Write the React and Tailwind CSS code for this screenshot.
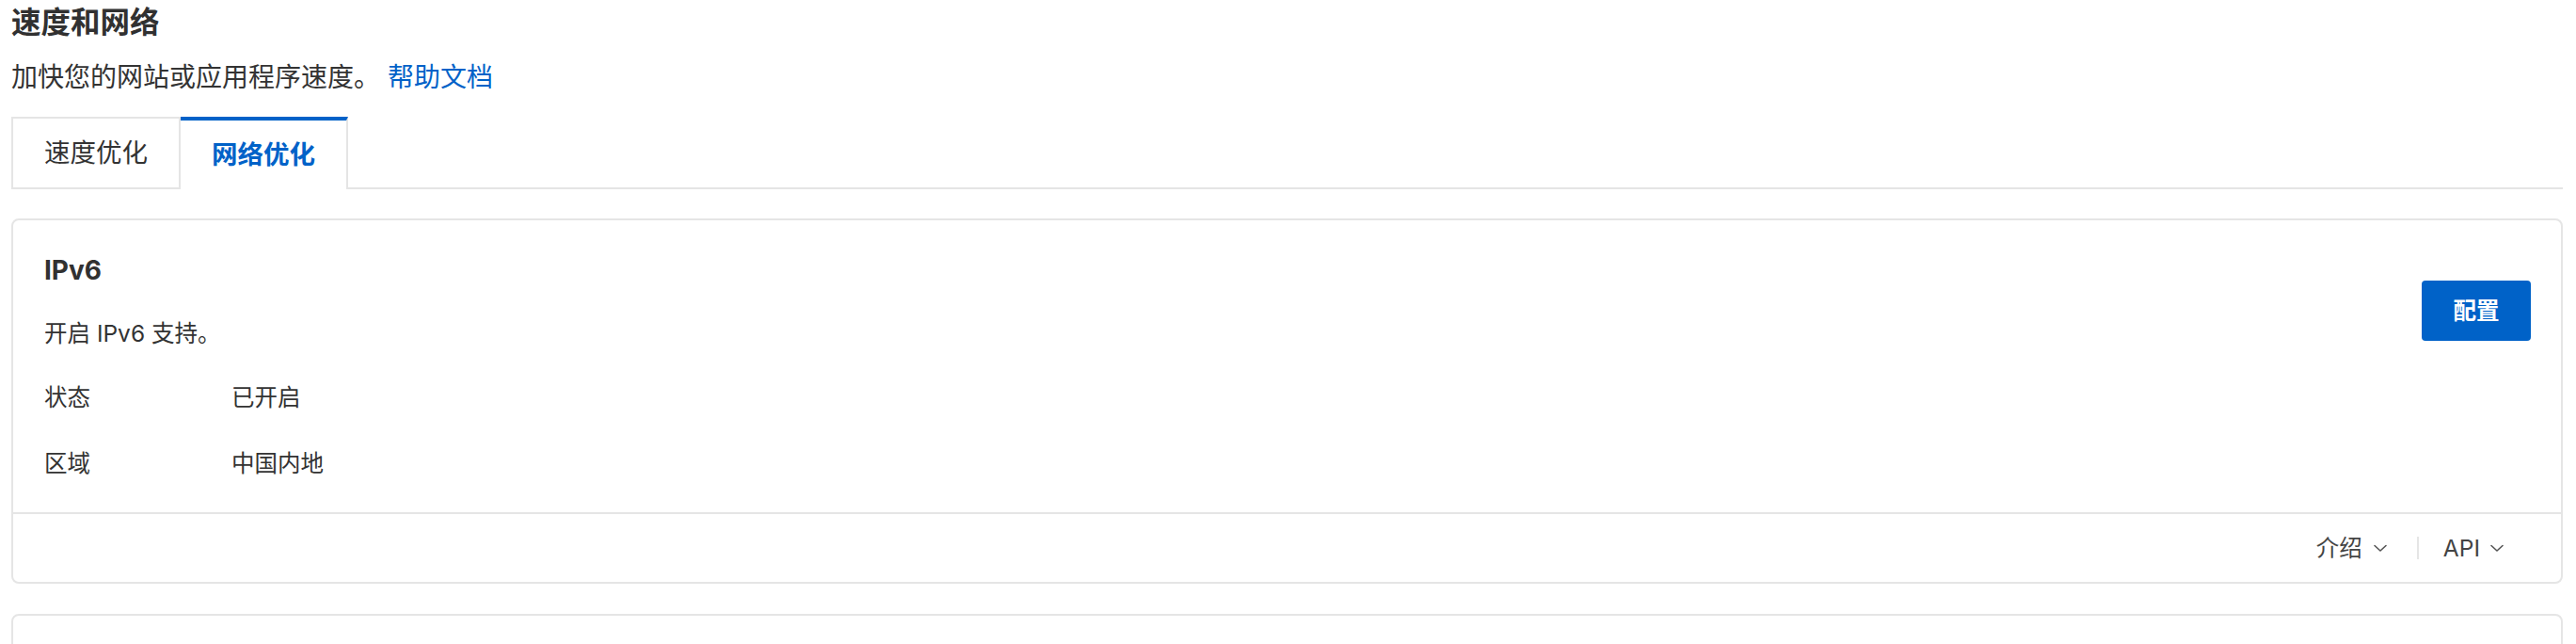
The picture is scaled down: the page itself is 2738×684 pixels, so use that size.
import React from "react";

function Chevron() {
  return (
    <svg width="16" height="10" viewBox="0 0 16 10" fill="none" className="shrink-0">
      <path d="M2 2.5 L8 8 L14 2.5" stroke="#555" strokeWidth="1.6" strokeLinecap="round" strokeLinejoin="round" />
    </svg>
  );
}

export default function App() {
  return (
    <div
      className="h-[684px] w-full overflow-hidden bg-white pl-[12px] pr-[14px] text-[#313131]"
      style={{ fontFamily: 'Inter, "Noto Sans CJK SC", "Noto Sans", sans-serif' }}
    >
      <h1 className="text-[31.5px] font-bold leading-[47px] text-[#313131]">速度和网络</h1>
      <p className="mt-[14px] text-[28px] leading-[42px] text-[#333]">
        加快您的网站或应用程序速度。 <span className="text-[#0062c8]">帮助文档</span>
      </p>

      <div className="mt-[21px] flex border-b-2 border-[#e5e5e5]">
        <div className="-mb-[2px] flex h-[77px] items-center border-2 border-[#e5e5e5] bg-white px-[33px] text-[27.5px] text-[#333]">
          速度优化
        </div>
        <div className="-mb-[2px] flex h-[77px] items-center border-t-4 border-r-2 border-t-[#0062c8] border-r-[#e5e5e5] bg-white px-[33px] text-[27.5px] font-bold text-[#0062c8]">
          网络优化
        </div>
      </div>

      <div className="mt-[31px] rounded-[8px] border-2 border-[#e5e5e5] bg-white">
        <div className="flex items-start justify-between pl-[33px] pr-[32px] pt-[32px] pb-[33px]">
          <div className="flex flex-col">
            <div className="text-[28px] font-bold leading-[42px] text-[#313131]">IPv6</div>
            <div className="mt-[28px] text-[24.5px] leading-[37px] text-[#333]">开启 IPv6 支持。</div>
            <div className="mt-[31px] flex text-[24.5px] leading-[37px] text-[#333]">
              <span className="w-[199px]">状态</span>
              <span>已开启</span>
            </div>
            <div className="mt-[33px] flex text-[24.5px] leading-[37px] text-[#333]">
              <span className="w-[199px]">区域</span>
              <span>中国内地</span>
            </div>
          </div>
          <button className="mt-[32px] flex h-[64px] w-[116px] items-center justify-center rounded-[4px] bg-[#0062c8] text-[24.5px] font-bold text-white">
            配置
          </button>
        </div>
        <div className="flex h-[74px] items-center justify-end border-t-2 border-[#e5e5e5] pr-[60px] text-[24.5px] text-[#444]">
          <div className="flex items-center gap-[11px]">
            <span>介绍</span>
            <Chevron />
          </div>
          <div className="ml-[31px] mr-[26px] h-[24px] w-[2px] bg-[#e5e5e5]" />
          <div className="flex items-center gap-[10px]">
            <span>API</span>
            <Chevron />
          </div>
        </div>
      </div>

      <div className="mt-[32px] h-[200px] rounded-[8px] border-2 border-[#e5e5e5] bg-white" />
    </div>
  );
}
